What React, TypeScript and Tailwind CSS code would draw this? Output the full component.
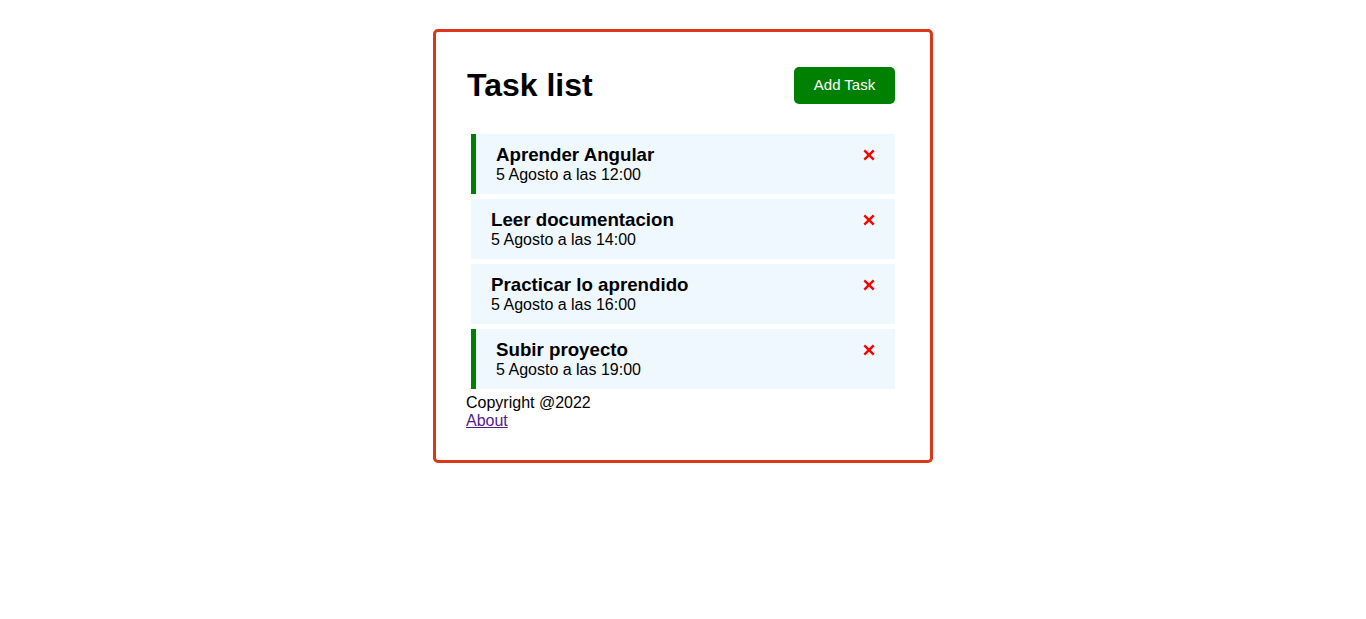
import React from "react";

type Task = {
    id: number;
    text: string;
    day: string;
    reminder: boolean;
};

const tasks: Task[] = [
    { id: 1, text: "Aprender Angular", day: "5 Agosto a las 12:00", reminder: true },
    { id: 2, text: "Leer documentacion", day: "5 Agosto a las 14:00", reminder: false },
    { id: 3, text: "Practicar lo aprendido", day: "5 Agosto a las 16:00", reminder: false },
    { id: 4, text: "Subir proyecto", day: "5 Agosto a las 19:00", reminder: true },
];

export default function App() {
    return (
        <div className="min-h-[619px] bg-white pt-[29px] font-['Liberation_Sans',Arial,sans-serif] text-black">
            <div className="mx-auto w-[500px] rounded-[5px] border-[3px] border-[#dd3719] p-[30px]">
                <Header />
                <div>
                    {tasks.map((task) => (
                        <TaskItem key={task.id} task={task} />
                    ))}
                </div>
                <footer className="text-base leading-[18px]">
                    <p>Copyright @2022</p>
                    <a href="#" className="text-[#551a8b] underline">
                        About
                    </a>
                </footer>
            </div>
        </div>
    );
}

function Header() {
    return (
        <header className="mb-[25px] flex items-center justify-between">
            <h1 className="pl-px text-[32px] font-bold leading-[37px]">Task list</h1>
            <button className="m-[5px] h-[37px] w-[101px] rounded-[5px] bg-[#008000] text-[15px] text-white">
                Add Task
            </button>
        </header>
    );
}

function TimesIcon() {
    // small red "x" used as the delete control
    return (
        <svg width="12" height="12" viewBox="0 0 12 12" className="shrink-0">
            <path d="M1.3 1.3 L10.7 10.7 M10.7 1.3 L1.3 10.7" stroke="#ff0000" strokeWidth="2.4" />
        </svg>
    );
}

function TaskItem({ task }: { task: Task }) {
    return (
        <div
            className={
                task.reminder
                    ? "m-[5px] h-[60px] border-l-[5px] border-[#008000] bg-[#f0f8ff] px-5 py-[10px]"
                    : "m-[5px] h-[60px] bg-[#f0f8ff] px-5 py-[10px]"
            }
        >
            <h3 className="flex items-center justify-between text-[18.72px] font-bold leading-[21px]">
                {task.text}
                <TimesIcon />
            </h3>
            <p className="text-base leading-[19px]">{task.day}</p>
        </div>
    );
}
